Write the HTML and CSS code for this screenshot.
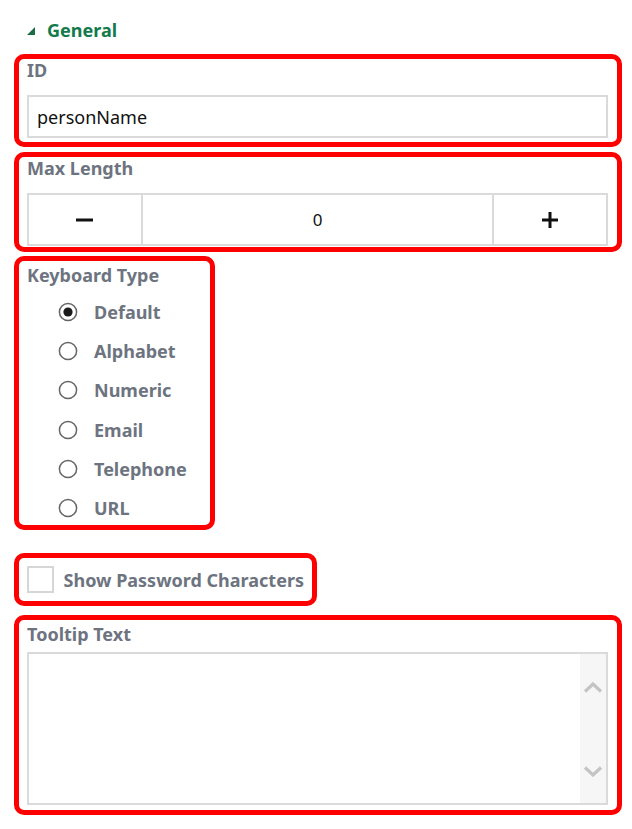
FILE: index.html
```html
<!DOCTYPE html>
<html>
<head>
<meta charset="utf-8">
<link rel="stylesheet" href="styles.css">
</head>
<body>
<div class="panel">
  <div class="section-head">
    <svg class="caret" width="8" height="8" viewBox="0 0 8 8"><polygon points="8,0 8,8 0,8" fill="#1d6b45"/></svg>
    <span class="section-title">General</span>
  </div>

  <div class="group g-id">
    <div class="label">ID</div>
    <div class="text-input">personName</div>
  </div>

  <div class="group g-max">
    <div class="label">Max Length</div>
    <div class="stepper">
      <div class="step-btn">
        <svg width="18" height="4" viewBox="0 0 18 4"><rect x="0" y="0.5" width="17" height="3" fill="#111"/></svg>
      </div>
      <div class="step-value">0</div>
      <div class="step-btn">
        <svg width="16" height="16" viewBox="0 0 16 16"><rect x="0" y="6.5" width="16" height="3" fill="#111"/><rect x="6.5" y="0" width="3" height="16" fill="#111"/></svg>
      </div>
    </div>
  </div>

  <div class="group g-kbd">
    <div class="label">Keyboard Type</div>
    <div class="radios">
      <div class="radio-row">
        <svg class="radio" width="20" height="20" viewBox="0 0 20 20"><circle cx="10" cy="10" r="8.6" fill="#fff" stroke="#666" stroke-width="1.5"/><circle cx="10" cy="10" r="4.6" fill="#1b1b1b"/></svg>
        <span class="opt">Default</span>
      </div>
      <div class="radio-row">
        <svg class="radio" width="20" height="20" viewBox="0 0 20 20"><circle cx="10" cy="10" r="8.6" fill="#fff" stroke="#666" stroke-width="1.5"/></svg>
        <span class="opt">Alphabet</span>
      </div>
      <div class="radio-row">
        <svg class="radio" width="20" height="20" viewBox="0 0 20 20"><circle cx="10" cy="10" r="8.6" fill="#fff" stroke="#666" stroke-width="1.5"/></svg>
        <span class="opt">Numeric</span>
      </div>
      <div class="radio-row">
        <svg class="radio" width="20" height="20" viewBox="0 0 20 20"><circle cx="10" cy="10" r="8.6" fill="#fff" stroke="#666" stroke-width="1.5"/></svg>
        <span class="opt">Email</span>
      </div>
      <div class="radio-row">
        <svg class="radio" width="20" height="20" viewBox="0 0 20 20"><circle cx="10" cy="10" r="8.6" fill="#fff" stroke="#666" stroke-width="1.5"/></svg>
        <span class="opt">Telephone</span>
      </div>
      <div class="radio-row">
        <svg class="radio" width="20" height="20" viewBox="0 0 20 20"><circle cx="10" cy="10" r="8.6" fill="#fff" stroke="#666" stroke-width="1.5"/></svg>
        <span class="opt">URL</span>
      </div>
    </div>
  </div>

  <div class="group g-check">
    <div class="checkbox"></div>
    <span class="label check-label">Show Password Characters</span>
  </div>

  <div class="group g-tip">
    <div class="label">Tooltip Text</div>
    <div class="textarea">
      <div class="ta-body"></div>
      <div class="ta-scroll">
        <svg width="20" height="11" viewBox="0 0 20 11"><polyline points="2,9.5 10,2 18,9.5" fill="none" stroke="#c4c4c4" stroke-width="3.2"/></svg>
        <svg width="20" height="11" viewBox="0 0 20 11"><polyline points="2,1.5 10,9 18,1.5" fill="none" stroke="#c4c4c4" stroke-width="3.2"/></svg>
      </div>
    </div>
  </div>
</div>
</body>
</html>
```

FILE: styles.css
```css
* { box-sizing: border-box; }

html, body {
  margin: 0;
  padding: 0;
  background: #ffffff;
}

body {
  font-family: "Noto Sans", "Open Sans", sans-serif;
  font-size: 18px;
  color: #6d7480;
}

.panel {
  width: 632px;
  padding-top: 19px;
}

.section-head {
  display: flex;
  align-items: center;
  gap: 12px;
  height: 22px;
  padding-left: 27px;
  margin-bottom: 13px;
}

.caret {
  margin-top: 2px;
}

.section-title {
  color: #137a4c;
  font-weight: 700;
  font-size: 18px;
  line-height: 22px;
}

.group {
  border: 5px solid #ff0000;
  border-radius: 10px;
  margin-left: 14px;
  padding: 0 9px 4px 8px;
}

.label {
  font-weight: 700;
  font-size: 18px;
  line-height: 22px;
  color: #6d7480;
}

.g-id {
  width: 608px;
}

.text-input {
  margin-top: 14px;
  height: 43px;
  border: 2px solid #dadada;
  padding-left: 8px;
  display: flex;
  align-items: center;
  color: #111;
  font-size: 18px;
}

.g-max {
  width: 608px;
  margin-top: 5px;
  padding-bottom: 1px;
}

.stepper {
  margin-top: 14px;
  height: 53px;
  border: 2px solid #dadada;
  display: flex;
}

.step-btn {
  width: 114px;
  display: flex;
  align-items: center;
  justify-content: center;
}

.step-btn:first-child {
  border-right: 2px solid #dadada;
}

.step-btn:last-child {
  border-left: 2px solid #dadada;
}

.step-value {
  flex: 1;
  display: flex;
  align-items: center;
  justify-content: center;
  color: #111;
  font-size: 17px;
}

.g-kbd {
  width: 201px;
  margin-top: 4px;
  padding-top: 3px;
  padding-bottom: 5px;
}

.radios {
  display: flex;
  flex-direction: column;
  gap: 15.2px;
  padding-left: 31px;
  margin-top: 14px;
}

.radio-row {
  display: flex;
  align-items: center;
  gap: 16px;
  height: 24px;
}

.opt {
  font-weight: 700;
  font-size: 18px;
  line-height: 24px;
  color: #6d7480;
}

.g-check {
  width: 303px;
  margin-top: 23px;
  height: 53px;
  display: flex;
  align-items: center;
  gap: 10px;
  padding: 0 8px;
}

.checkbox {
  width: 27px;
  height: 27px;
  border: 2px solid #d6d6d6;
  background: #fff;
}

.check-label {
  white-space: nowrap;
  margin-top: 2px;
}

.g-tip {
  width: 608px;
  margin-top: 9px;
  padding-top: 3px;
  padding-bottom: 5px;
}

.textarea {
  margin-top: 7px;
  height: 153px;
  border: 2px solid #dadada;
  display: flex;
}

.ta-body {
  flex: 1;
}

.ta-scroll {
  width: 26px;
  background: #f6f6f6;
  display: flex;
  flex-direction: column;
  align-items: center;
  justify-content: space-between;
  padding: 28px 0 26px;
}
```
